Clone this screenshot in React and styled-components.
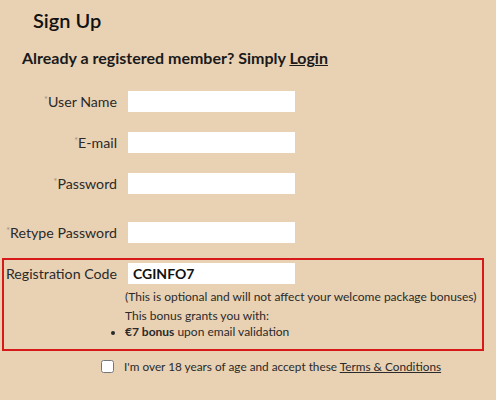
import React from 'react';
import styled, { createGlobalStyle } from 'styled-components';

const GlobalStyle = createGlobalStyle`
  html, body {
    margin: 0;
    padding: 0;
    background: #e9d1b4;
  }
  body {
    font-family: Lato, "Liberation Sans", sans-serif;
    color: #1e1e1e;
  }
`;

const fields = [
  { label: 'User Name', type: 'text' },
  { label: 'E-mail', type: 'text' },
  { label: 'Password', type: 'password' },
  { label: 'Retype Password', type: 'password', spaced: true },
];

const App = () => {
  return (
    <Page>
      <GlobalStyle />
      <Title>Sign Up</Title>
      <Intro>
        Already a registered member? Simply <IntroLink href="#">Login</IntroLink>
      </Intro>
      <Fields>
        {fields.map((f) => (
          <Row key={f.label} $spaced={f.spaced}>
            <Label>
              <Star>*</Star>
              {f.label}
            </Label>
            <Input type={f.type} />
          </Row>
        ))}
      </Fields>
      <CodeBox>
        <Row $inBox>
          <Label>Registration Code</Label>
          <Input type="text" defaultValue="CGINFO7" $strong />
        </Row>
        <Help>
          <Note>(This is optional and will not affect your welcome package bonuses)</Note>
          <Note>This bonus grants you with:</Note>
          <Bullets>
            <li>
              <b>€7 bonus</b> upon email validation
            </li>
          </Bullets>
        </Help>
      </CodeBox>
      <Agree>
        <Check type="checkbox" />
        <span>
          I'm over 18 years of age and accept these <AgreeLink href="#">Terms &amp; Conditions</AgreeLink>
        </span>
      </Agree>
    </Page>
  );
};

const Page = styled.div`
  width: 496px;
  height: 400px;
  box-sizing: border-box;
  padding-top: 8px;
  overflow: hidden;
`;

const Title = styled.h1`
  margin: 0 0 0 33px;
  font-size: 20px;
  font-weight: 600;
  line-height: 24px;
  color: #111;
`;

const Intro = styled.p`
  margin: 17px 0 0 22px;
  font-size: 16px;
  font-weight: 700;
  line-height: 18px;
  color: #1a1a1a;
`;

const IntroLink = styled.a`
  color: #1a1a1a;
  text-decoration: underline;
`;

const Fields = styled.div`
  margin-top: 24px;
  display: flex;
  flex-direction: column;
  gap: 20px;
`;

const Row = styled.div`
  display: grid;
  grid-template-columns: ${(p) => (p.$inBox ? '113px' : '117px')} 167px;
  column-gap: 11px;
  align-items: center;
  margin-top: ${(p) => (p.$spaced ? '8px' : '0')};
`;

const Label = styled.label`
  text-align: right;
  font-size: 14.2px;
  color: #2a2a2a;
  white-space: nowrap;
`;

const Star = styled.span`
  font-size: 9px;
  color: #a0907f;
  vertical-align: 4px;
`;

const Input = styled.input`
  box-sizing: border-box;
  height: 21px;
  width: 167px;
  border: none;
  outline: none;
  background: #fff;
  padding: 0 5px;
  font-family: Lato, "Liberation Sans", sans-serif;
  font-size: 14px;
  font-weight: ${(p) => (p.$strong ? 700 : 400)};
  color: #111;
`;

const CodeBox = styled.div`
  margin: 15px 0 0 2px;
  width: 482px;
  height: 93px;
  box-sizing: border-box;
  border: 2px solid #d8191a;
  padding-top: 3px;
`;

const Help = styled.div`
  margin: 5px 0 0 121px;
  font-size: 12px;
  color: #2a2a2a;
`;

const Note = styled.p`
  margin: 0 0 4px;
  line-height: 15px;
`;

const Bullets = styled.ul`
  margin: -3px 0 0 -2px;
  padding: 0 0 0 2px;
  list-style: disc outside;
  line-height: 15px;

  li::marker {
    font-size: 11px;
  }

  b {
    font-weight: 700;
  }
`;

const Agree = styled.label`
  margin: 8px 0 0 101px;
  display: flex;
  align-items: center;
  gap: 10px;
  font-size: 11.8px;
  color: #2a2a2a;
`;

const Check = styled.input`
  margin: 0;
  width: 13px;
  height: 13px;
`;

const AgreeLink = styled.a`
  color: #2a2a2a;
  text-decoration: underline;
`;

export default App;
